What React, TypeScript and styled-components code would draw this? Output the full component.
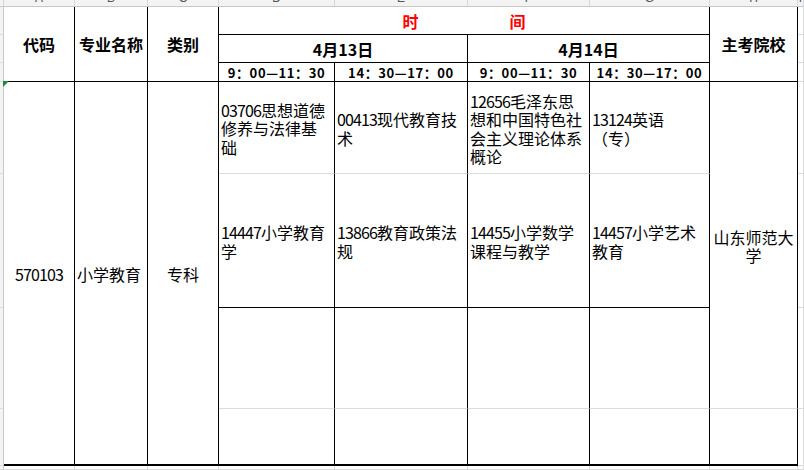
import React from 'react';
import styled, { createGlobalStyle } from 'styled-components';

const GRID = '#dcdcdc';
const INK = '#000000';

const GlobalStyle = createGlobalStyle`
    html, body {
        margin: 0;
        padding: 0;
        background: #ffffff;
        overflow: hidden;
    }
    body {
        font-family: 'Noto Sans CJK SC', 'Liberation Sans', sans-serif;
        color: #000000;
    }
`;

const Sheet = styled.div`
    display: grid;
    width: 804px;
    height: 470px;
    grid-template-columns: 4px 71px 73px 71px 116px 133px 122px 120px 88px 6px;
    grid-template-rows: 7px 28px 28px 19px 92px 134px 101px 57px 1fr;
    overflow: hidden;
`;

type CellProps = {
    $col: string;
    $row: string;
    $r?: string;
    $b?: string;
    $bw?: number;
};

const Cell = styled.div<CellProps>`
    position: relative;
    box-sizing: border-box;
    grid-column: ${(p) => p.$col};
    grid-row: ${(p) => p.$row};
    border-right: 1px solid ${(p) => p.$r ?? GRID};
    border-bottom: ${(p) => p.$bw ?? 1}px solid ${(p) => p.$b ?? GRID};
    display: flex;
    align-items: center;
    min-width: 0;
    min-height: 0;
`;

const ColumnLetter = styled(Cell)`
    background: #f3f3f3;
    border-right-color: #d6d6d6;
    border-bottom-color: #c8c8c8;
    justify-content: center;
    align-items: flex-end;
    overflow: hidden;
    font-family: 'Liberation Sans', sans-serif;
    font-size: 12px;
    line-height: 12px;
    color: #555555;

    span {
        margin-bottom: 2px;
    }
`;

const RowHeader = styled(Cell)`
    background: #f3f3f3;
    border-right-color: #c8c8c8;
`;

const HeadCell = styled(Cell)`
    justify-content: center;
    font-size: 16px;
    font-weight: 700;
    white-space: nowrap;
`;

const TitleCell = styled(HeadCell)`
    color: #ff0000;
    gap: 91px;
`;

const SlotCell = styled(Cell)`
    justify-content: center;
    font-family: 'Noto Sans CJK SC', sans-serif;
    font-size: 13px;
    font-weight: 700;
    letter-spacing: 0.6px;
    white-space: nowrap;
`;

const BodyCell = styled(Cell)<{ $center?: boolean }>`
    justify-content: ${(p) => (p.$center ? 'center' : 'flex-start')};
    text-align: ${(p) => (p.$center ? 'center' : 'left')};
    padding: 2px 0 0 ${(p) => (p.$center ? 0 : 2)}px;
    font-size: 16px;
    line-height: 18.5px;
    white-space: nowrap;
`;

const Code = styled.span`
    letter-spacing: -0.9px;
`;

const ErrorMark = styled.span`
    position: absolute;
    top: -1px;
    left: -1px;
    width: 0;
    height: 0;
    border-top: 6px solid #1e8a3c;
    border-right: 6px solid transparent;
`;

const letters = ['A', 'B', 'C', 'D', 'E', 'F', 'G', 'H', 'I'];
const slots = ['9：00—11：30', '14：30—17：00', '9：00—11：30', '14：30—17：00'];

const morning = [
    { code: '03706', lines: ['思想道德', '修养与法律基', '础'] },
    { code: '00413', lines: ['现代教育技', '术'] },
    { code: '12656', lines: ['毛泽东思', '想和中国特色社', '会主义理论体系', '概论'] },
    { code: '13124', lines: ['英语', '（专）'] },
];

const afternoon = [
    { code: '14447', lines: ['小学教育', '学'] },
    { code: '13866', lines: ['教育政策法', '规'] },
    { code: '14455', lines: ['小学数学', '课程与教学'] },
    { code: '14457', lines: ['小学艺术', '教育'] },
];

function Subject({ code, lines }: { code: string; lines: string[] }) {
    return (
        <div>
            <Code>{code}</Code>
            {lines.map((line, i) => (
                <React.Fragment key={i}>
                    {i > 0 && <br />}
                    {line}
                </React.Fragment>
            ))}
        </div>
    );
}

export default function App() {
    return (
        <>
            <GlobalStyle />
            <Sheet>
                <ColumnLetter $col="1" $row="1" />
                {letters.map((l, i) => (
                    <ColumnLetter key={l} $col={`${i + 2}`} $row="1">
                        <span>{l}</span>
                    </ColumnLetter>
                ))}

                {[2, 3, 4, 5, 6, 7, 8, 9].map((r) => (
                    <RowHeader key={r} $col="1" $row={`${r}`} />
                ))}

                <HeadCell $col="2" $row="2 / 5" $r={INK} $b={INK}>代码</HeadCell>
                <HeadCell $col="3" $row="2 / 5" $r={INK} $b={INK}>专业名称</HeadCell>
                <HeadCell $col="4" $row="2 / 5" $r={INK} $b={INK}>类别</HeadCell>
                <TitleCell $col="5 / 9" $row="2" $r={INK} $b={INK}>
                    <span>时</span>
                    <span>间</span>
                </TitleCell>
                <HeadCell $col="9" $row="2 / 5" $r={INK} $b={INK}>主考院校</HeadCell>
                <HeadCell $col="5 / 7" $row="3" $r={INK} $b={INK}>4月13日</HeadCell>
                <HeadCell $col="7 / 9" $row="3" $r={INK} $b={INK}>4月14日</HeadCell>
                {slots.map((s, i) => (
                    <SlotCell key={i} $col={`${i + 5}`} $row="4" $r={INK} $b={INK}>
                        {s}
                    </SlotCell>
                ))}

                <BodyCell $col="2" $row="5 / 9" $r={INK} $b={INK} $bw={2} $center>
                    <ErrorMark />
                    <Code>570103</Code>
                </BodyCell>
                <BodyCell $col="3" $row="5 / 9" $r={INK} $b={INK} $bw={2}>小学教育</BodyCell>
                <BodyCell $col="4" $row="5 / 9" $r={INK} $b={INK} $bw={2} $center>专科</BodyCell>

                {morning.map((s, i) => (
                    <BodyCell key={s.code} $col={`${i + 5}`} $row="5" $r={INK}>
                        <Subject code={s.code} lines={s.lines} />
                    </BodyCell>
                ))}
                {afternoon.map((s, i) => (
                    <BodyCell key={s.code} $col={`${i + 5}`} $row="6" $r={INK} $b={INK}>
                        <Subject code={s.code} lines={s.lines} />
                    </BodyCell>
                ))}
                {[5, 6, 7, 8].map((c) => (
                    <BodyCell key={`e7-${c}`} $col={`${c}`} $row="7" $r={INK} />
                ))}
                {[5, 6, 7, 8].map((c) => (
                    <BodyCell key={`e8-${c}`} $col={`${c}`} $row="8" $r={INK} $b={INK} $bw={2} />
                ))}

                <BodyCell $col="9" $row="5 / 8" $r={INK} $center>
                    <div>
                        山东师范大
                        <br />学
                    </div>
                </BodyCell>
                <BodyCell $col="9" $row="8" $r={INK} $b={INK} $bw={2} />

                {[2, 3, 4, 5, 6, 7, 8].map((r) => (
                    <Cell key={`i-${r}`} $col="10" $row={`${r}`} />
                ))}
                {[2, 3, 4, 5, 6, 7, 8, 9, 10].map((c) => (
                    <Cell key={`tail-${c}`} $col={`${c}`} $row="9" />
                ))}
            </Sheet>
        </>
    );
}
